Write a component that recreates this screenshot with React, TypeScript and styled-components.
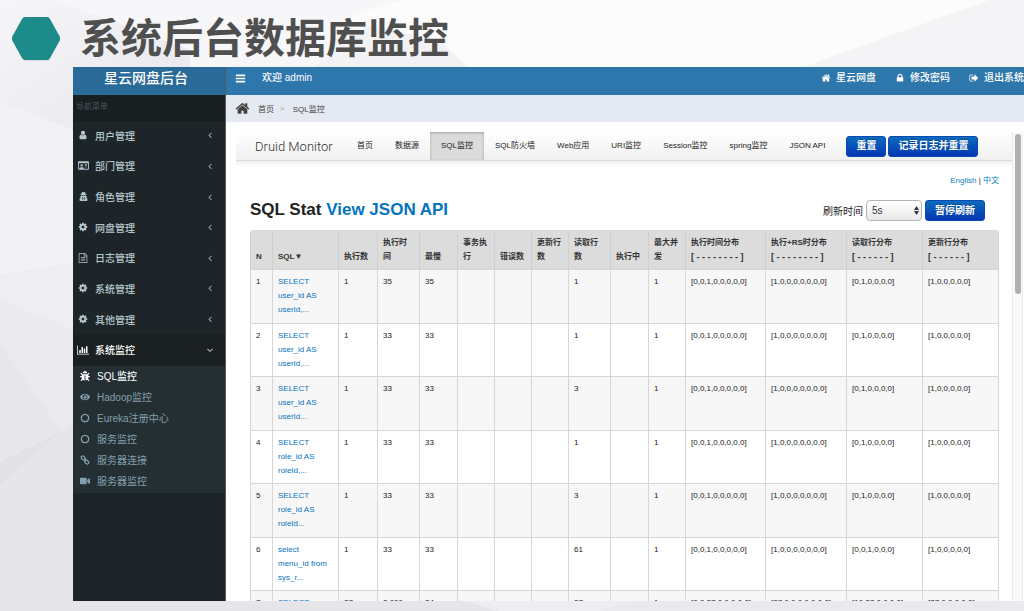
import React from "react";
import styled, { createGlobalStyle, css } from "styled-components";
import type { IconType } from "react-icons";
import { FaBug, FaEye, FaRegIdCard, FaUserSecret, FaVideo } from "react-icons/fa";

const GlobalStyle = createGlobalStyle`
  * { box-sizing: border-box; }
  body {
    margin: 0;
    font-family: "Liberation Sans", "Noto Sans CJK SC", sans-serif;
    font-size: 8px;
    color: #222;
    background: #ececf0;
  }
  button, select { font-family: inherit; }
  a { text-decoration: none; }
  ul { list-style: none; margin: 0; padding: 0; }
`;

const Slide = styled.div`
  position: relative;
  display: flex;
  flex-direction: column;
  height: 100vh;
  overflow: hidden;
`;

const Backdrop = styled.svg`
  position: absolute;
  inset: 0;
  width: 100%;
  height: 100%;
  z-index: -1;
`;

const SlideHeader = styled.header`
  display: flex;
  align-items: center;
  gap: 19px;
  height: 67px;
  padding: 10px 12px 0;
  flex: none;
`;

const Hexagon = styled.svg`
  width: 49px;
  height: 48px;
  overflow: visible;
`;

const SlideTitle = styled.h1`
  margin: 0;
  font-size: 41px;
  line-height: 56px;
  font-weight: 700;
  color: #4f4f4f;
`;

const Shell = styled.div`
  display: flex;
  flex: 1;
  min-height: 0;
  margin: 0 0 10px 73px;
  overflow: hidden;
`;

const Sidebar = styled.aside`
  width: 153px;
  flex: none;
  background: #1e2528;
  border-right: 1px solid #555c60;
`;

const Brand = styled.div`
  height: 28px;
  padding-right: 6px;
  background: #296a98;
  color: #fff;
  font-size: 14px;
  line-height: 22px;
  font-weight: 500;
  text-align: center;
`;

const MenuCaption = styled.div`
  height: 26px;
  padding-left: 3px;
  background: #191e20;
  color: #43565e;
  font-size: 8px;
  line-height: 24px;
`;

const Menu = styled.ul`
  display: grid;
  grid-auto-rows: 1fr;
  height: 245px;
`;

const MenuLink = styled.a<{ $active?: boolean }>`
  display: flex;
  align-items: center;
  height: 100%;
  padding: 0 10px 2px 4px;
  font-size: 10px;
  font-weight: 500;
  color: ${(p) => (p.$active ? "#fff" : "#b4c5cc")};
  background: ${(p) => (p.$active ? "#1a1f21" : "transparent")};
  span { flex: 1; }
`;

const IconSlot = styled.i`
  display: flex;
  justify-content: center;
  width: 12px;
  margin-right: 6px;
  flex: none;
`;

const SubMenu = styled.ul`
  padding-bottom: 1px;
  background: #242f33;
`;

const SubLink = styled.a<{ $active?: boolean }>`
  display: flex;
  align-items: center;
  height: 21px;
  padding: 0 0 2px 6px;
  font-size: 10px;
  font-weight: ${(p) => (p.$active ? 500 : 400)};
  color: ${(p) => (p.$active ? "#fff" : "#839fab")};
`;

const Main = styled.main`
  display: flex;
  flex-direction: column;
  flex: 1;
  min-width: 0;
  background: #fff;
`;

const TopBar = styled.nav`
  display: flex;
  align-items: flex-start;
  height: 28px;
  flex: none;
  padding-left: 9px;
  background: #2e77ad;
  color: #fff;
  font-size: 10px;
  line-height: 22px;
  font-weight: 500;
  white-space: nowrap;
`;

const MenuToggle = styled.button`
  display: flex;
  align-items: center;
  height: 22px;
  margin-right: 16px;
  padding: 0;
  border: 0;
  background: none;
  color: #fff;
`;

const UserLinks = styled.div`
  display: flex;
  gap: 19px;
  margin-left: auto;
`;

const UserLink = styled.a`
  display: flex;
  align-items: center;
  gap: 5px;
  color: #fff;
`;

const Crumbs = styled.nav`
  display: flex;
  align-items: center;
  height: 27px;
  flex: none;
  padding-left: 9px;
  background: #e4e9f2;
  color: #444;
  a { color: #444; margin-left: 8px; }
  span { margin-left: 6px; color: #999; }
`;

const Frame = styled.div`
  display: flex;
  flex: 1;
  min-height: 0;
  padding: 10px 1px 0 10px;
`;

const Page = styled.div`
  flex: 1;
  min-width: 0;
  overflow: hidden;
`;

const Scrollbar = styled.div`
  width: 11px;
  flex: none;
  padding: 2px;
  background: #fafafa;
  border-left: 1px solid #ececec;
  border-right: 1px solid #ececec;
`;

const Thumb = styled.div`
  width: 6px;
  height: 160px;
  border-radius: 3px;
  background: #b0b0b0;
`;

const DruidBar = styled.nav`
  display: flex;
  align-items: center;
  height: 29px;
  padding-left: 19px;
  background: linear-gradient(#fff, #f0f0f0);
  border-bottom: 1px solid #dcdcdc;
  box-shadow: 0 1px 6px rgba(0, 0, 0, 0.12);
  white-space: nowrap;
`;

const DruidBrand = styled.a`
  width: 91px;
  font-family: Roboto, "Liberation Sans", sans-serif;
  font-size: 13px;
  font-weight: 300;
  color: #333;
`;

const Tab = styled.a<{ $active?: boolean }>`
  height: 28px;
  padding: 0 11px;
  line-height: 28px;
  color: #222;
  ${(p) =>
    p.$active &&
    css`
      background: #dbdbdb;
      box-shadow: inset 0 1px 3px rgba(0, 0, 0, 0.25);
    `}
`;

const BarButtons = styled.div`
  display: flex;
  gap: 2px;
  margin-left: 10px;
`;

const BlueButton = styled.button`
  height: 21px;
  padding: 0 9px;
  border: 1px solid #0a4aae;
  border-radius: 3px;
  background: linear-gradient(#0a6cbd, #0436b4);
  color: #fff;
  font-size: 10px;
  line-height: 18px;
  font-weight: 700;
  text-shadow: 0 -1px 0 rgba(0, 0, 0, 0.25);
  white-space: nowrap;
`;

const Body = styled.section`
  padding: 12px 13px 0 14px;
`;

const Languages = styled.div`
  text-align: right;
  line-height: 16px;
  a { color: #0a7fc8; }
`;

const TitleRow = styled.div`
  display: flex;
  align-items: center;
  justify-content: space-between;
  height: 41px;
  padding-right: 14px;
`;

const Heading = styled.h2`
  margin: 0;
  font-size: 17px;
  line-height: 20px;
  color: #222;
  a { color: #0573c0; }
`;

const Refresh = styled.div`
  display: flex;
  align-items: center;
  padding-top: 2px;
  font-size: 10px;
`;

const SelectBox = styled.div`
  position: relative;
  margin: 0 3px;
  svg {
    position: absolute;
    right: 3px;
    top: 6px;
    pointer-events: none;
  }
`;

const Select = styled.select`
  appearance: none;
  display: block;
  width: 56px;
  height: 21px;
  padding: 0 5px;
  border: 1px solid #b4b4b4;
  border-radius: 4px;
  background: linear-gradient(#fff, #e9e9e9);
  color: #333;
  font-size: 10px;
`;

const Table = styled.table`
  width: 100%;
  table-layout: fixed;
  border-collapse: separate;
  border-spacing: 0;
  border: 1px solid #d6d6d6;
  border-width: 1px 1px 0 0;
  border-radius: 3px 3px 0 0;
  line-height: 14px;
  overflow: hidden;
`;

const HeadCell = styled.th`
  padding: 5px 5px;
  border-left: 1px solid #d0d0d0;
  background: #dcdcdc;
  text-align: left;
  vertical-align: bottom;
  font-weight: 700;
  color: #333;
`;

const Dashes = styled.span`
  display: block;
  font-size: 9px;
  line-height: 14px;
  white-space: nowrap;
`;

const Row = styled.tr`
  td { background: #fff; padding: 5px 0 5px 5px; }
  &:nth-child(odd) td { background: #f7f7f7; padding-bottom: 6px; }
`;

const Cell = styled.td`
  border-left: 1px solid #d6d6d6;
  border-top: 1px solid #d6d6d6;
  vertical-align: top;
  white-space: nowrap;
`;

const SqlLink = styled.a`
  display: block;
  color: #0573c0;
  white-space: pre-line;
`;

const glyph = (path: string): IconType =>
  function Glyph({ size = 10 }) {
    return (
      <svg width={size} height={size} viewBox="0 0 1792 1792" fill="currentColor" aria-hidden="true">
        <path d={path} />
      </svg>
    );
  };

const UserIcon = glyph("M1536 1399q0 109-62.500 187t-150.500 78h-854q-88 0-150.500-78t-62.500-187q0-85 8.500-160.500t31.500-152 58.500-131 94-89 134.500-34.500q131 128 313 128t313-128q76 0 134.500 34.500t94 89 58.500 131 31.500 152 8.500 160.500zm-256-887q0 159-112.500 271.500t-271.500 112.500-271.500-112.500-112.500-271.500 112.500-271.500 271.500-112.500 271.500 112.500 112.500 271.500z");
const CogIcon = glyph("M1152 896q0-106-75-181t-181-75-181 75-75 181 75 181 181 75 181-75 75-181zm512-109v222q0 12-8 23t-20 13l-185 28q-19 54-39 91 35 50 107 138 10 12 10 25t-9 23q-27 37-99 108t-94 71q-12 0-26-9l-138-108q-44 23-91 38-16 136-29 186-7 28-36 28h-222q-14 0-24.500-8.500t-11.500-21.500l-28-184q-49-16-90-37l-141 107q-10 9-25 9-14 0-25-11-126-114-165-168-7-10-7-23 0-12 8-23 15-21 51-66.500t54-70.500q-27-50-41-99l-183-27q-13-2-21-12.500t-8-23.500v-222q0-12 8-23t19-13l186-28q14-46 39-92-40-57-107-138-10-12-10-24 0-10 9-23 26-36 98.500-107.500t94.500-71.500q13 0 26 10l138 107q44-23 91-38 16-136 29-186 7-28 36-28h222q14 0 24.500 8.500t11.500 21.500l28 184q49 16 90 37l142-107q9-9 24-9 13 0 25 10 129 119 165 170 7 8 7 22 0 12-8 23-15 21-51 66.500t-54 70.500q26 50 41 98l183 28q13 2 21 12.500t8 23.500z");
const HomeIcon = glyph("M1472 992v480q0 26-19 45t-45 19h-384v-384h-256v384h-384q-26 0-45-19t-19-45v-480q0-1 .5-3t.5-3l575-474 575 474q1 2 1 6zm223-69l-62 74q-8 9-21 11h-3q-13 0-21-7l-692-577-692 577q-12 8-24 7-13-2-21-11l-62-74q-8-10-7-23.500t11-21.500l719-599q32-26 76-26t76 26l244 204v-195q0-14 9-23t23-9h192q14 0 23 9t9 23v408l219 182q10 8 11 21.500t-7 23.500z");
const LockIcon = glyph("M640 768h512v-192q0-106-75-181t-181-75-181 75-75 181v192zm832 96v576q0 40-28 68t-68 28h-960q-40 0-68-28t-28-68v-576q0-40 28-68t68-28h32v-192q0-184 132-316t316-132 316 132 132 316v192h32q40 0 68 28t28 68z");
const AngleLeftIcon = glyph("M1203 544q0 13-10 23l-393 393 393 393q10 10 10 23t-10 23l-50 50q-10 10-23 10t-23-10l-466-466q-10-10-10-23t10-23l466-466q10-10 23-10t23 10l50 50q10 10 10 23z");
const AngleDownIcon = glyph("M1395 736q0 13-10 23l-466 466q-10 10-23 10t-23-10l-466-466q-10-10-10-23t10-23l50-50q10-10 23-10t23 10l393 393 393-393q10-10 23-10t23 10l50 50q10 10 10 23z");
const BarsIcon = glyph("M1664 1344v128q0 26-19 45t-45 19h-1408q-26 0-45-19t-19-45v-128q0-26 19-45t45-19h1408q26 0 45 19t19 45zm0-512v128q0 26-19 45t-45 19h-1408q-26 0-45-19t-19-45v-128q0-26 19-45t45-19h1408q26 0 45 19t19 45zm0-512v128q0 26-19 45t-45 19h-1408q-26 0-45-19t-19-45v-128q0-26 19-45t45-19h1408q26 0 45 19t19 45z");
const CircleIcon = glyph("M896 352q-148 0-273 73t-198 198-73 273 73 273 198 198 273 73 273-73 198-198 73-273-73-273-198-198-273-73zm768 544q0 209-103 385.500t-279.500 279.500-385.500 103-385.500-103-279.500-279.500-103-385.500 103-385.500 279.500-279.500 385.500-103 385.500 103 279.500 279.500 103 385.500z");
const SignOutIcon = glyph("M704 1440q0 4 1 20t.5 26.500-3 23.500-10 19.500-20.500 6.500h-320q-119 0-203.500-84.500t-84.500-203.500v-704q0-119 84.500-203.500t203.500-84.500h320q13 0 22.500 9.500t9.500 22.500q0 4 1 20t.5 26.500-3 23.500-10 19.500-20.500 6.500h-320q-66 0-113 47t-47 113v704q0 66 47 113t113 47h312l11.500 1 11.500 3 8 5.500 7 9 2 13.500zm928-544q0 26-19 45l-544 544q-19 19-45 19t-45-19-19-45v-288h-448q-26 0-45-19t-19-45v-384q0-26 19-45t45-19h448v-288q0-26 19-45t45-19 45 19l544 544q19 19 19 45z");
const FileIcon = glyph("M1596 380q28 28 48 76t20 88v1152q0 40-28 68t-68 28h-1344q-40 0-68-28t-28-68v-1600q0-40 28-68t68-28h896q40 0 88 20t76 48zm-444-244v376h376q-10-29-22-41l-313-313q-12-12-41-22zm384 1528v-1024h-416q-40 0-68-28t-28-68v-416h-768v1536h1280zm-1024-864q0-14 9-23t23-9h704q14 0 23 9t9 23v64q0 14-9 23t-23 9h-704q-14 0-23-9t-9-23v-64zm736 224q14 0 23 9t9 23v64q0 14-9 23t-23 9h-704q-14 0-23-9t-9-23v-64q0-14 9-23t23-9h704zm0 256q14 0 23 9t9 23v64q0 14-9 23t-23 9h-704q-14 0-23-9t-9-23v-64q0-14 9-23t23-9h704z");

const ChartIcon: IconType = ({ size = 12 }) => (
  <svg width={size} height={size} viewBox="0 0 16 14" fill="currentColor" aria-hidden="true">
    <path d="M0 1h1v11h15v1H0zM3 7h2v4H3zM6 3h2v8H6zM9 5h2v6H9zM12 2h2v9h-2z" />
  </svg>
);

const ChainIcon: IconType = ({ size = 10 }) => (
  <svg width={size} height={size} viewBox="0 0 20 20" fill="none" stroke="currentColor" strokeWidth="2.400" aria-hidden="true">
    <rect x="2" y="3" width="9" height="6" rx="3" transform="rotate(45 6.500 6)" />
    <rect x="9" y="11" width="9" height="6" rx="3" transform="rotate(45 13.500 14)" />
    <path d="M8 8L12 12" />
  </svg>
);

const menu: { label: string; icon: IconType; size: number; open?: boolean }[] = [
  { label: "用户管理", icon: UserIcon, size: 10 },
  { label: "部门管理", icon: FaRegIdCard, size: 11 },
  { label: "角色管理", icon: FaUserSecret, size: 9 },
  { label: "网盘管理", icon: CogIcon, size: 10 },
  { label: "日志管理", icon: FileIcon, size: 10 },
  { label: "系统管理", icon: CogIcon, size: 10 },
  { label: "其他管理", icon: CogIcon, size: 10 },
  { label: "系统监控", icon: ChartIcon, size: 12, open: true },
];

const subMenu: { label: string; icon: IconType; active?: boolean }[] = [
  { label: "SQL监控", icon: FaBug, active: true },
  { label: "Hadoop监控", icon: FaEye },
  { label: "Eureka注册中心", icon: CircleIcon },
  { label: "服务监控", icon: CircleIcon },
  { label: "服务器连接", icon: ChainIcon },
  { label: "服务器监控", icon: FaVideo },
];

const tabs = ["首页", "数据源", "SQL监控", "SQL防火墙", "Web应用", "URI监控", "Session监控", "spring监控", "JSON API"];

const columns: { title: string; width: number; dashes?: string }[] = [
  { title: "N", width: 22 },
  { title: "SQL▼", width: 66 },
  { title: "执行数", width: 39 },
  { title: "执行时间", width: 42 },
  { title: "最慢", width: 38 },
  { title: "事务执行", width: 37 },
  { title: "错误数", width: 37 },
  { title: "更新行数", width: 37 },
  { title: "读取行数", width: 42 },
  { title: "执行中", width: 38 },
  { title: "最大并发", width: 37 },
  { title: "执行时间分布", width: 80, dashes: "[ - - - - - - - - ]" },
  { title: "执行+RS时分布", width: 81, dashes: "[ - - - - - - - - ]" },
  { title: "读取行分布", width: 76, dashes: "[ - - - - - - ]" },
  { title: "更新行分布", width: 76, dashes: "[ - - - - - - ]" },
];

const T = "[0,0,1,0,0,0,0,0]";
const RS = "[1,0,0,0,0,0,0,0]";
const U = "[1,0,0,0,0,0]";

const stat = (sql: string, count: string, time: string, slow: string, read: string, dist: string[]) => [
  sql, count, time, slow, "", "", "", read, "", "1", ...dist,
];

const rows = [
  stat("SELECT\nuser_id AS\nuserId,...", "1", "35", "35", "1", [T, RS, "[0,1,0,0,0,0]", U]),
  stat("SELECT\nuser_id AS\nuserId,...", "1", "33", "33", "1", [T, RS, "[0,1,0,0,0,0]", U]),
  stat("SELECT\nuser_id AS\nuserId...", "1", "33", "33", "3", [T, RS, "[0,1,0,0,0,0]", U]),
  stat("SELECT\nrole_id AS\nroleId,...", "1", "33", "33", "1", [T, RS, "[0,1,0,0,0,0]", U]),
  stat("SELECT\nrole_id AS\nroleId...", "1", "33", "33", "3", [T, RS, "[0,1,0,0,0,0]", U]),
  stat("select\nmenu_id from\nsys_r...", "1", "33", "33", "61", [T, RS, "[0,0,1,0,0,0]", U]),
  stat("SELECT", "27", "3,000", "34", "27", [
    "[0,0,27,0,0,0,0,0]",
    "[27,0,0,0,0,0,0,0]",
    "[10,27,0,0,0,0]",
    "[27,0,0,0,0,0]",
  ]),
];

export default function App() {
  return (
    <Slide>
      <GlobalStyle />
      <Backdrop viewBox="0 0 1024 611" preserveAspectRatio="none" aria-hidden="true">
        <defs>
          <linearGradient id="shade" x1="0" y1="0" x2="1" y2="1">
            <stop offset="0" stopColor="#f6f6f9" />
            <stop offset="1" stopColor="#e6e6eb" />
          </linearGradient>
        </defs>
        <rect width="1024" height="611" fill="#f2f2f5" />
        <path d="M0 0H55L190 50V130H73L0 102Z" fill="url(#shade)" />
        <path d="M55 0H400L310 70H190V50Z" fill="#f7f7f9" />
        <path d="M400 0H990L795 70H470L440 40L340 20Z" fill="#fcfcfd" />
        <path d="M990 0H1024V70H795Z" fill="#f4f4f6" />
        <path d="M0 102L73 130V262L0 275Z" fill="#f2f2f5" />
        <path d="M0 275L73 262V330L0 300Z" fill="#eeeef2" />
        <path d="M0 300L73 330V424L61 431L0 343Z" fill="#ebebef" />
        <path d="M0 343L61 431L0 462Z" fill="#e7e7eb" />
        <path d="M0 462L61 431L0 486Z" fill="#e1e1e6" />
        <path d="M0 486L61 431L73 424V611H0Z" fill="#e6e6ea" />
        <path d="M0 601H465L500 611H0Z" fill="#e5e5ea" />
        <path d="M465 601H630L600 611H500Z" fill="#eeeef2" />
        <path d="M630 601H1024V611H600Z" fill="#e9e9ee" />
      </Backdrop>

      <SlideHeader>
        <Hexagon viewBox="0 0 49 48" aria-hidden="true">
          <path d="M13 4H36L48 25L37 46H12L0 25Z" fill="#000" opacity="0.1" />
          <path d="M13 2H35Q37 2 38 4L48 22Q48 23 48 25L38 43Q37 45 35 45H13Q11 45 10 43L0 25Q0 23 0 22L10 4Q11 2 13 2Z" fill="#1c8b8a" />
        </Hexagon>
        <SlideTitle>系统后台数据库监控</SlideTitle>
      </SlideHeader>

      <Shell>
        <Sidebar>
          <Brand>星云网盘后台</Brand>
          <MenuCaption>导航菜单</MenuCaption>
          <Menu>
            {menu.map(({ label, icon: Icon, size, open }) => (
              <li key={label}>
                <MenuLink href="#" $active={open}>
                  <IconSlot><Icon size={size} /></IconSlot>
                  <span>{label}</span>
                  {open ? <AngleDownIcon size={10} /> : <AngleLeftIcon size={10} />}
                </MenuLink>
              </li>
            ))}
          </Menu>
          <SubMenu>
            {subMenu.map(({ label, icon: Icon, active }) => (
              <li key={label}>
                <SubLink href="#" $active={active}>
                  <IconSlot><Icon size={10} /></IconSlot>
                  {label}
                </SubLink>
              </li>
            ))}
          </SubMenu>
        </Sidebar>

        <Main>
          <TopBar>
            <MenuToggle aria-label="切换菜单"><BarsIcon size={11} /></MenuToggle>
            <span>欢迎 admin</span>
            <UserLinks>
              <UserLink href="#"><HomeIcon size={10} />星云网盘</UserLink>
              <UserLink href="#"><LockIcon size={10} />修改密码</UserLink>
              <UserLink href="#"><SignOutIcon size={10} />退出系统</UserLink>
            </UserLinks>
          </TopBar>
          <Crumbs>
            <HomeIcon size={15} />
            <a href="#">首页</a>
            <span>&gt;</span>
            <a href="#">SQL监控</a>
          </Crumbs>

          <Frame>
            <Page>
              <DruidBar>
                <DruidBrand href="#">Druid Monitor</DruidBrand>
                {tabs.map((tab) => (
                  <Tab key={tab} href="#" $active={tab === "SQL监控"}>{tab}</Tab>
                ))}
                <BarButtons>
                  <BlueButton>重置</BlueButton>
                  <BlueButton>记录日志并重置</BlueButton>
                </BarButtons>
              </DruidBar>

              <Body>
                <Languages>
                  <a href="#">English</a> | <a href="#">中文</a>
                </Languages>
                <TitleRow>
                  <Heading>SQL Stat <a href="#">View JSON API</a></Heading>
                  <Refresh>
                    <label htmlFor="interval">刷新时间</label>
                    <SelectBox>
                      <Select id="interval" defaultValue="5s">
                        <option>5s</option>
                        <option>10s</option>
                      </Select>
                      <svg width="5" height="9" viewBox="0 0 5 9" fill="#333" aria-hidden="true">
                        <path d="M0 4L2.500 0L5 4ZM0 5H5L2.500 9Z" />
                      </svg>
                    </SelectBox>
                    <BlueButton>暂停刷新</BlueButton>
                  </Refresh>
                </TitleRow>

                <Table>
                  <colgroup>
                    {columns.map((c) => <col key={c.title} width={c.width} />)}
                  </colgroup>
                  <thead>
                    <tr>
                      {columns.map((c) => (
                        <HeadCell key={c.title} scope="col">
                          {c.title}
                          {c.dashes && <Dashes>{c.dashes}</Dashes>}
                        </HeadCell>
                      ))}
                    </tr>
                  </thead>
                  <tbody>
                    {rows.map((row, i) => (
                      <Row key={i}>
                        <Cell>{i + 1}</Cell>
                        {row.map((value, j) => (
                          <Cell key={j}>{j === 0 ? <SqlLink href="#">{value}</SqlLink> : value}</Cell>
                        ))}
                      </Row>
                    ))}
                  </tbody>
                </Table>
              </Body>
            </Page>
            <Scrollbar><Thumb /></Scrollbar>
          </Frame>
        </Main>
      </Shell>
    </Slide>
  );
}
